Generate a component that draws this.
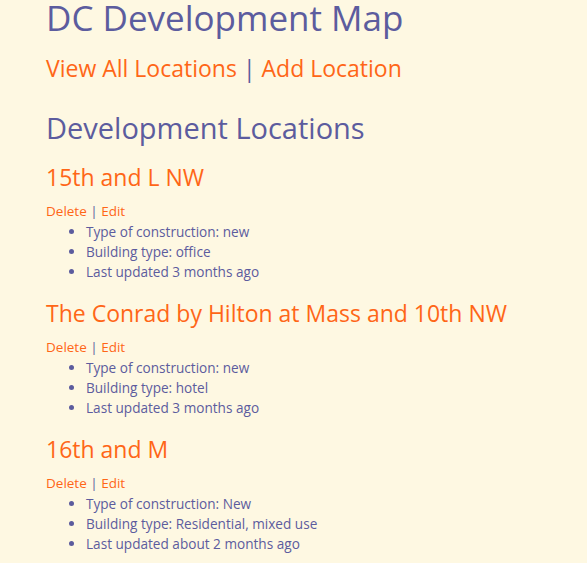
import React from "react";

const locations = [
  { name: "15th and L NW", type: "new", building: "office", updated: "3 months ago" },
  { name: "The Conrad by Hilton at Mass and 10th NW", type: "new", building: "hotel", updated: "3 months ago" },
  { name: "16th and M", type: "New", building: "Residential, mixed use", updated: "about 2 months ago" },
];

export default function App() {
  return (
    <div
      className="min-h-[563px] w-full bg-[#fef8e2] pl-[46px] text-[#5c5c9e]"
      style={{ fontFamily: '"Open Sans", "Noto Sans", sans-serif' }}
    >
      <h1 className="text-[35px] leading-[36px]">DC Development Map</h1>
      <div className="mt-[17px] text-[23px] leading-[30px]">
        <a className="text-[#ff6617]">View All Locations</a> | <a className="text-[#ff6617]">Add Location</a>
      </div>
      <h2 className="mt-[28px] text-[29px] leading-[34px]">Development Locations</h2>
      {locations.map((l, i) => (
        <div key={i} className={i === 0 ? "mt-[18px]" : "mt-[17px]"}>
          <h3 className="text-[23px] leading-[28px] text-[#ff6617]">{l.name}</h3>
          <div className="mt-[10px] text-[13.5px] leading-[20px]">
            <a className="text-[#ff6617]">Delete</a> | <a className="text-[#ff6617]">Edit</a>
          </div>
          <ul className="mt-[1px] list-disc pl-[40px] text-[13.6px] leading-[20px]">
            <li>Type of construction: {l.type}</li>
            <li>Building type: {l.building}</li>
            <li>Last updated {l.updated}</li>
          </ul>
        </div>
      ))}
    </div>
  );
}
